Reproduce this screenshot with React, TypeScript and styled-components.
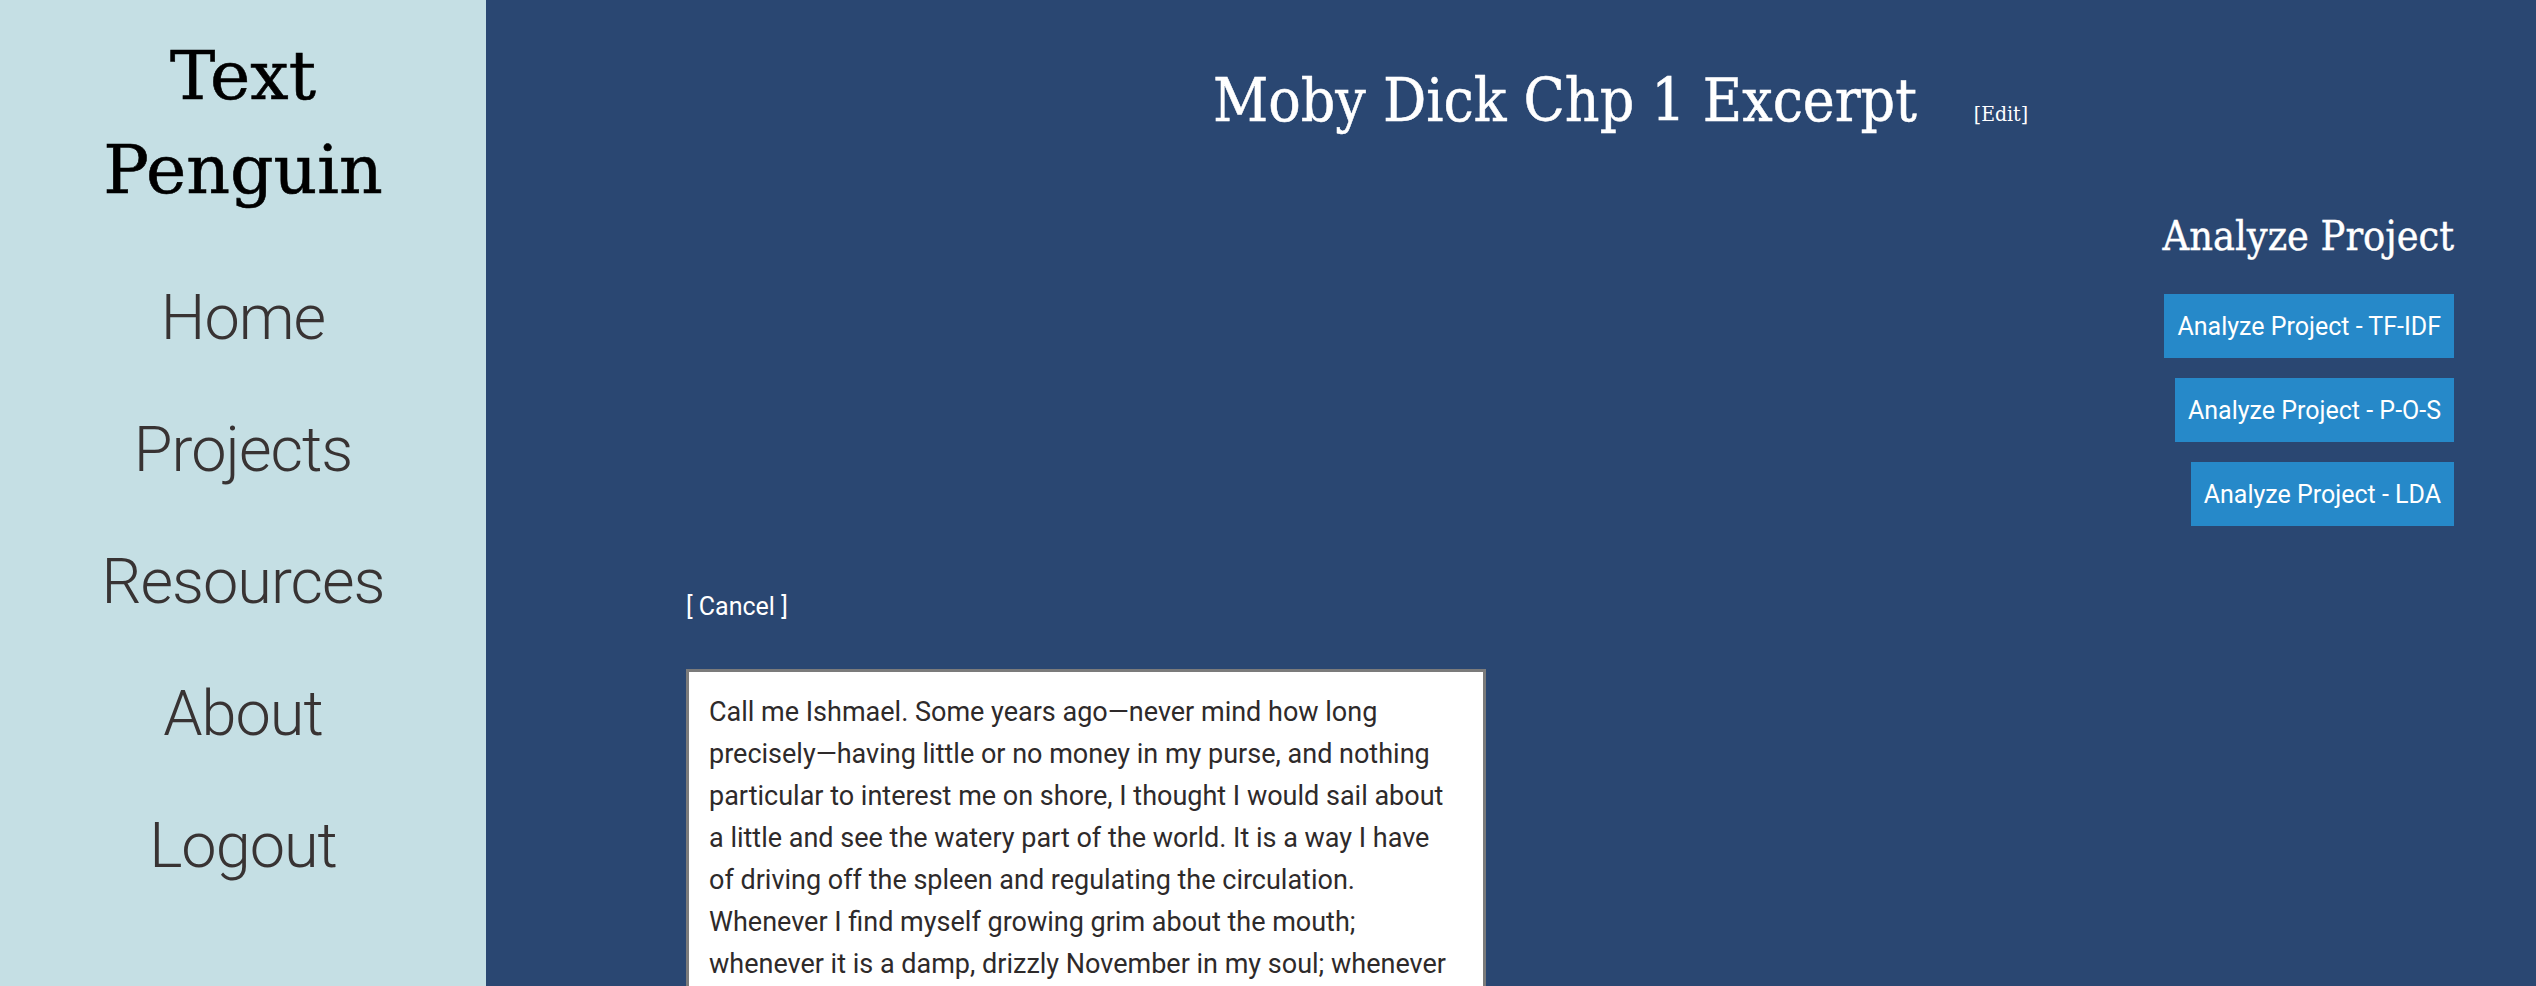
import React from "react";
import styled, { createGlobalStyle } from "styled-components";

const GlobalStyle = createGlobalStyle`
  html, body { margin: 0; padding: 0; }
  body { font-family: "Roboto", "Liberation Sans", sans-serif; }
  * { box-sizing: border-box; }
`;

const Page = styled.div`
  display: flex;
  height: 100vh;
  overflow: hidden;
`;

const Sidebar = styled.aside`
  width: 486px;
  flex: none;
  background: #c5dfe4;
  display: flex;
  flex-direction: column;
  align-items: center;
  padding-top: 29px;
`;

const Brand = styled.h1`
  margin: 0;
  font-family: "DejaVu Serif", "Liberation Serif", serif;
  font-weight: 400;
  font-size: 68px;
  line-height: 94px;
  color: #000;
  text-align: center;
  -webkit-text-stroke: 0.6px #000;
`;

const Nav = styled.nav`
  display: flex;
  flex-direction: column;
  align-items: center;
  margin-top: 35px;
`;

const NavLink = styled.a`
  font-family: "Roboto", "Liberation Sans", sans-serif;
  font-weight: 300;
  font-size: 63px;
  line-height: 132px;
  color: #383333;
  text-decoration: none;
  letter-spacing: -1px;
`;

const Main = styled.main`
  flex: 1;
  background: #2a4772;
  display: flex;
  flex-direction: column;
  padding-top: 64px;
  color: #fff;
`;

const Header = styled.header`
  display: flex;
  align-items: baseline;
  gap: 57px;
  padding-left: 727px;
`;

const Title = styled.h2`
  margin: 0;
  font-family: "DejaVu Serif Condensed", "DejaVu Serif", serif;
  font-weight: 400;
  font-size: 60px;
  line-height: 1.2;
  -webkit-text-stroke: 0.5px #fff;
`;

const EditLink = styled.a`
  font-family: "DejaVu Serif Condensed", "DejaVu Serif", serif;
  font-size: 21px;
  color: #fff;
  text-decoration: none;
`;

const AnalyzePanel = styled.section`
  align-self: flex-end;
  margin-right: 82px;
  margin-top: 76px;
  display: flex;
  flex-direction: column;
  align-items: flex-end;
  gap: 20px;
`;

const PanelTitle = styled.h3`
  margin: 0 0 13px;
  font-family: "DejaVu Serif Condensed", "DejaVu Serif", serif;
  font-weight: 400;
  font-size: 41px;
  line-height: 1.2;
  -webkit-text-stroke: 0.4px #fff;
`;

const AnalyzeButton = styled.button`
  height: 64px;
  padding: 0 13px;
  border: none;
  background: #2689c9;
  color: #fff;
  font-family: "Roboto", "Liberation Sans", sans-serif;
  font-size: 25px;
  cursor: pointer;
`;

const Editor = styled.section`
  margin-left: 200px;
  margin-top: 66px;
  display: flex;
  flex-direction: column;
  align-items: flex-start;
`;

const CancelLink = styled.a`
  font-family: "Roboto", "Liberation Sans", sans-serif;
  font-size: 25px;
  line-height: 30px;
  color: #fff;
  text-decoration: none;
`;

const TextBox = styled.div`
  margin-top: 47px;
  width: 800px;
  min-height: 420px;
  background: #fff;
  border: 3px solid #7b7b7b;
  padding: 19px 20px;
  font-family: "Roboto", "Liberation Sans", sans-serif;
  font-size: 27px;
  line-height: 42px;
  color: #2e2a2a;
  white-space: pre;
  overflow: hidden;
`;

const mobyText = [
  "Call me Ishmael. Some years ago\u2014never mind how long",
  "precisely\u2014having little or no money in my purse, and nothing",
  "particular to interest me on shore, I thought I would sail about",
  "a little and see the watery part of the world. It is a way I have",
  "of driving off the spleen and regulating the circulation.",
  "Whenever I find myself growing grim about the mouth;",
  "whenever it is a damp, drizzly November in my soul; whenever",
].join("\n");

const navItems = ["Home", "Projects", "Resources", "About", "Logout"];
const analyses = ["TF-IDF", "P-O-S", "LDA"];

export default function App() {
  return (
    <>
      <GlobalStyle />
      <Page>
        <Sidebar>
          <Brand>
            Text
            <br />
            Penguin
          </Brand>
          <Nav>
            {navItems.map((item) => (
              <NavLink key={item} href="#">
                {item}
              </NavLink>
            ))}
          </Nav>
        </Sidebar>
        <Main>
          <Header>
            <Title>Moby Dick Chp 1 Excerpt</Title>
            <EditLink href="#">[Edit]</EditLink>
          </Header>
          <AnalyzePanel>
            <PanelTitle>Analyze Project</PanelTitle>
            {analyses.map((a) => (
              <AnalyzeButton key={a}>Analyze Project - {a}</AnalyzeButton>
            ))}
          </AnalyzePanel>
          <Editor>
            <CancelLink href="#">[ Cancel ]</CancelLink>
            <TextBox>{mobyText}</TextBox>
          </Editor>
        </Main>
      </Page>
    </>
  );
}
